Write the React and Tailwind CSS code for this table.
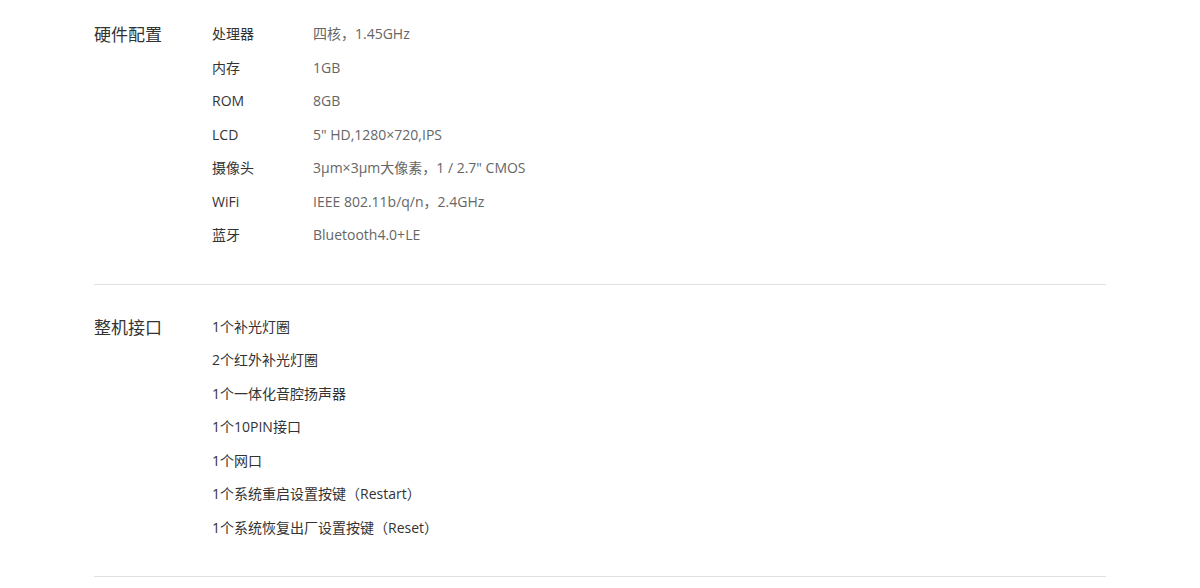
import React from 'react';

const hardware = [
  { label: '处理器', value: '四核，1.45GHz' },
  { label: '内存', value: '1GB' },
  { label: 'ROM', value: '8GB' },
  { label: 'LCD', value: '5" HD,1280×720,IPS' },
  { label: '摄像头', value: '3μm×3μm大像素，1 / 2.7" CMOS' },
  { label: 'WiFi', value: 'IEEE 802.11b/q/n，2.4GHz' },
  { label: '蓝牙', value: 'Bluetooth4.0+LE' },
];

const ports = [
  '1个补光灯圈',
  '2个红外补光灯圈',
  '1个一体化音腔扬声器',
  '1个10PIN接口',
  '1个网口',
  '1个系统重启设置按键（Restart）',
  '1个系统恢复出厂设置按键（Reset）',
];

const Section = ({ title, top, children }) => (
  <div className={`flex border-b border-[#e0e0e0] pb-[32px] ${top}`}>
    <div className="w-[118px] shrink-0 text-[17px] leading-[33.5px] text-[#333] pt-[1px]">{title}</div>
    <div className="flex-1">{children}</div>
  </div>
);

export default function App() {
  return (
    <div
      className="bg-white min-h-[588px] text-[14px]"
      style={{ fontFamily: '"Open Sans", "Noto Sans CJK SC", sans-serif' }}
    >
      <div className="w-[1012px] mx-auto">
        <Section title="硬件配置" top="pt-[17px]">
          {hardware.map((row) => (
            <div key={row.label} className="flex leading-[33.5px]">
              <span className="w-[101px] shrink-0 text-[#333]">{row.label}</span>
              <span className="text-[#666]">{row.value}</span>
            </div>
          ))}
        </Section>
        <Section title="整机接口" top="pt-[25px]">
          {ports.map((item) => (
            <div key={item} className="leading-[33.5px] text-[#333]">{item}</div>
          ))}
        </Section>
      </div>
    </div>
  );
}
